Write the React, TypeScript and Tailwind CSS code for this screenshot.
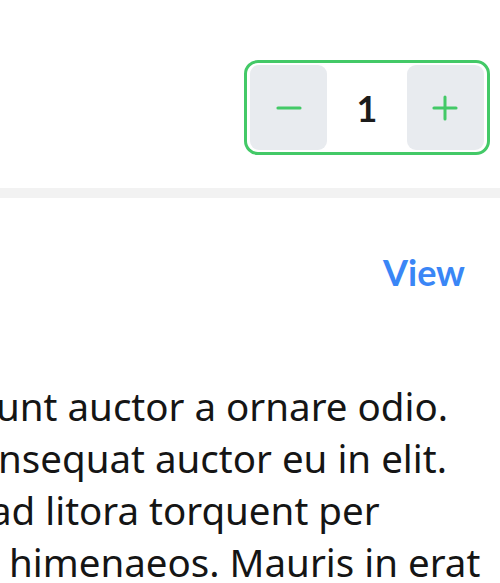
import { Minus, Plus } from "lucide-react";

const lines = [
  { text: "unt auctor a ornare odio.", offset: "-ml-[4px]" },
  { text: "nsequat auctor eu in elit.", offset: "-ml-[2px]" },
  { text: "ad litora torquent per", offset: "-ml-[10px]" },
  { text: "himenaeos. Mauris in erat", offset: "ml-[9px]" },
];

const App = () => {
  return (
    <div className="w-[500px] h-[583px] overflow-hidden bg-white">
      <div className="h-[188px] flex justify-end pt-[60px] pr-[10px]">
        <div className="flex items-center justify-between w-[246px] h-[95px] border-[3px] border-[#43c967] rounded-[14px] p-[3px]">
          <button className="w-[77px] h-[85px] rounded-[9px] bg-[#e8ebef] flex items-center justify-center text-[#43c967]">
            <Minus className="w-[38px] h-[38px]" strokeWidth={1.9} />
          </button>
          <span className="text-[36px] font-bold text-[#1c1c1c] leading-none" style={{ fontFamily: "Lato, sans-serif" }}>
            1
          </span>
          <button className="w-[77px] h-[85px] rounded-[9px] bg-[#e8ebef] flex items-center justify-center text-[#43c967]">
            <Plus className="w-[38px] h-[38px]" strokeWidth={1.9} />
          </button>
        </div>
      </div>
      <div className="h-[10px] bg-[#f2f2f2]" />
      <div className="flex justify-end pr-[35px] pt-[50px] h-[182px]">
        <span className="text-[36px] font-bold text-[#3a86f6] leading-[48px]" style={{ fontFamily: "Lato, sans-serif" }}>
          View
        </span>
      </div>
      <div className="text-[38.5px] leading-[52px] text-[#151515]" style={{ fontFamily: "'Noto Sans', sans-serif" }}>
        {lines.map((line, i) => (
          <div key={i} className={`whitespace-nowrap ${line.offset}`}>
            {line.text}
          </div>
        ))}
      </div>
    </div>
  );
};

export default App;
